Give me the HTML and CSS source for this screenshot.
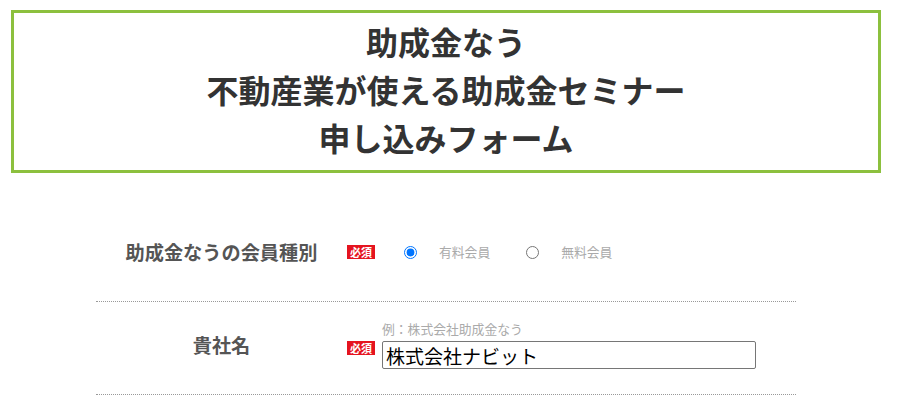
FILE: index.html
```html
<!DOCTYPE html>
<html lang="ja">
<head>
<meta charset="utf-8">
<title>助成金なう 申し込みフォーム</title>
<link rel="stylesheet" href="styles.css">
</head>
<body>
<div class="page">
  <header class="title-box">
    <h1 class="title">助成金なう<br>不動産業が使える助成金セミナー<br>申し込みフォーム</h1>
  </header>
  <form class="form">
    <div class="row row-member">
      <div class="label">助成金なうの会員種別</div>
      <span class="badge">必須</span>
      <div class="radios">
        <label class="radio radio-first"><input type="radio" name="member" checked><span>有料会員</span></label>
        <label class="radio radio-second"><input type="radio" name="member"><span>無料会員</span></label>
      </div>
    </div>
    <div class="row row-company">
      <div class="label">貴社名</div>
      <span class="badge badge-top">必須</span>
      <div class="field">
        <div class="hint">例：株式会社助成金なう</div>
        <input class="text-input" type="text" value="株式会社ナビット">
      </div>
    </div>
  </form>
</div>
</body>
</html>
```

FILE: styles.css
```css
html, body {
  margin: 0;
  padding: 0;
  background: #fff;
}

body {
  font-family: "Noto Sans CJK JP", "Noto Sans", sans-serif;
  color: #333;
}

.page {
  margin: 10px 30px 0 11px;
}

.title-box {
  border: 3px solid #8cc03e;
  padding: 4px 0 9px;
  text-align: center;
}

.title {
  margin: 0;
  font-size: 32px;
  line-height: 48px;
  font-weight: 700;
  color: #333;
}

.form {
  width: 700px;
  margin: 30px auto 0;
}

.row {
  display: grid;
  grid-template-columns: 251px 35px 1fr;
  border-bottom: 1px dotted #999;
}

.row-member {
  padding: 39px 0;
  align-items: center;
  min-height: 20px;
}

.row-company {
  padding: 18px 0 25px;
}

.label {
  text-align: center;
  font-size: 19.2px;
  line-height: 20px;
  font-weight: 700;
  color: #555;
  align-self: center;
}

.badge {
  justify-self: start;
  display: inline-block;
  background: #e5141f;
  color: #fff;
  font-size: 11px;
  line-height: 14px;
  font-weight: 700;
  padding: 0 3px;
  height: 14px;
}

.badge-top {
  align-self: start;
  margin-top: 21px;
}

.radios {
  display: flex;
  align-items: center;
  height: 20px;
}

.radio {
  display: inline-flex;
  align-items: center;
  gap: 22px;
  font-size: 12.8px;
  line-height: 20px;
  color: #aaa;
}

.radio input {
  margin: 0;
  width: 13px;
  height: 13px;
}

.radio-first {
  margin-left: 22px;
}

.radio-second {
  margin-left: 36px;
}

.field {
  display: flex;
  flex-direction: column;
  gap: 3px;
}

.hint {
  font-size: 12.8px;
  line-height: 18px;
  color: #aaa;
}

.text-input {
  box-sizing: border-box;
  width: 374px;
  height: 28px;
  margin: 0;
  padding: 0 3px;
  border: 1px solid #767676;
  border-radius: 2px;
  font-family: "Noto Sans CJK JP", "Noto Sans", sans-serif;
  font-size: 19px;
  color: #000;
  background: #fff;
}
```
